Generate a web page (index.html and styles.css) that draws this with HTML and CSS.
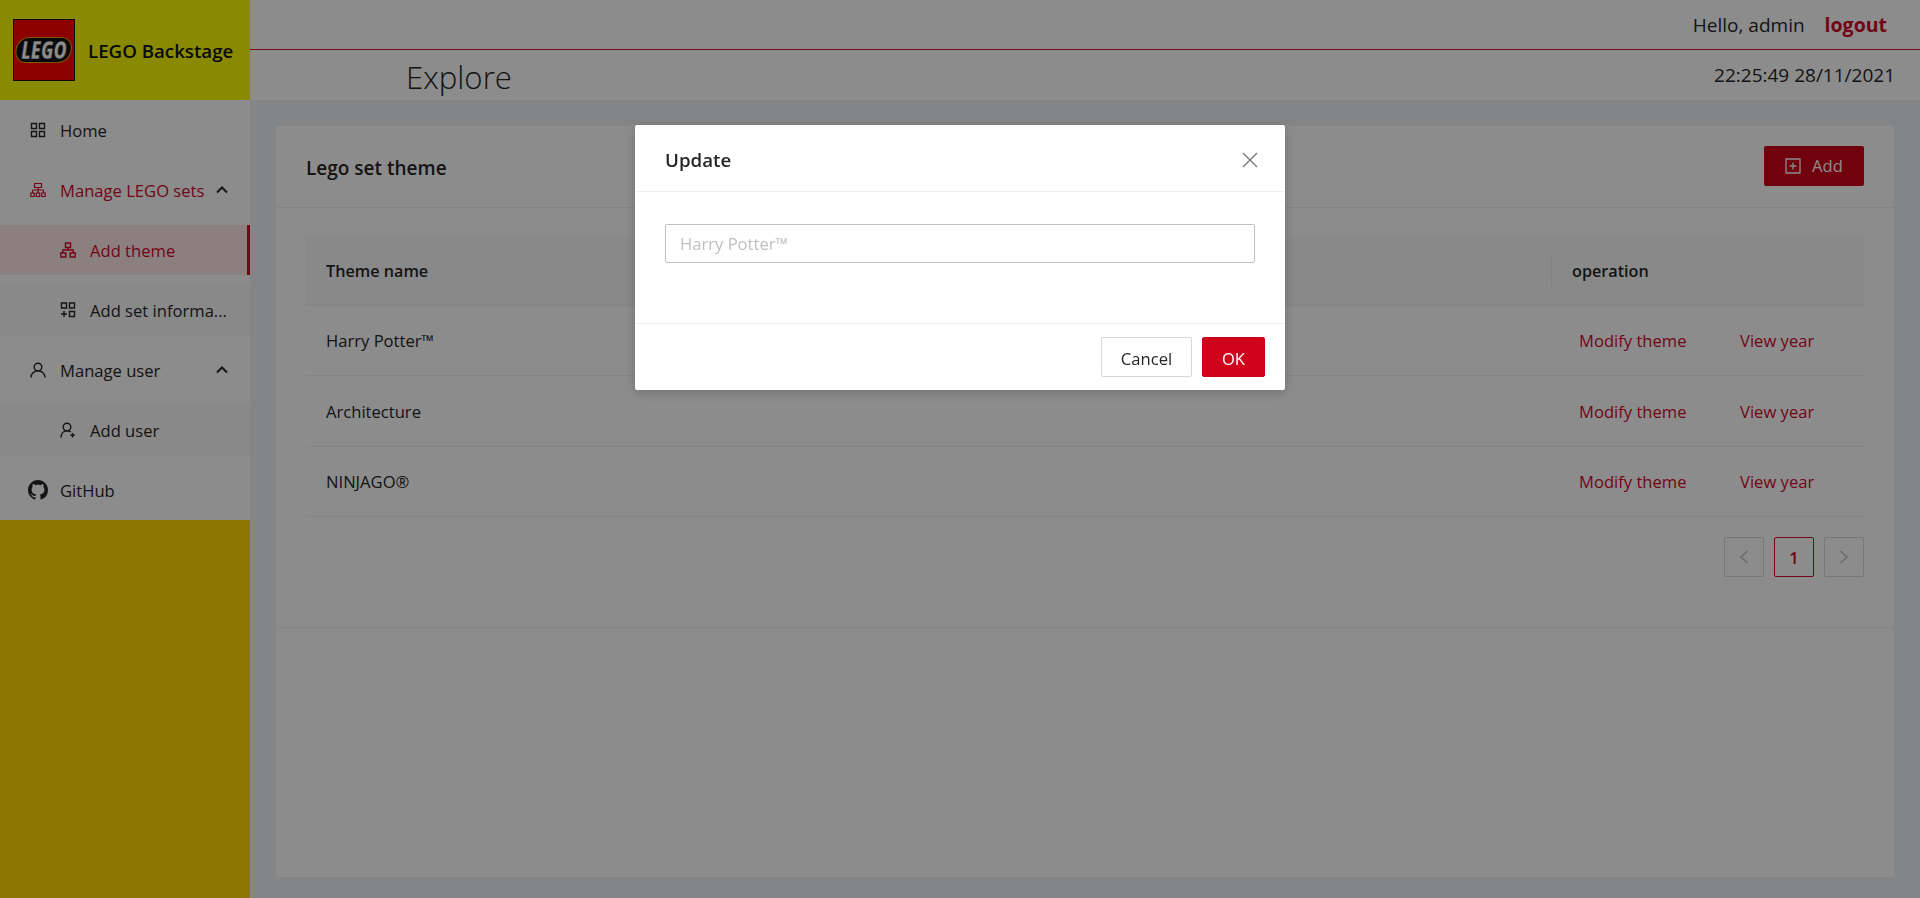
FILE: index.html
```html
<!DOCTYPE html>
<html lang="en">
<head>
    <meta charset="UTF-8">
    <title>LEGO Backstage</title>
    <link rel="stylesheet" href="styles.css">
</head>
<body>
    <aside class="sider">
        <div class="brand">
            <svg class="logo" viewBox="0 0 62 62">
                <rect x="0.5" y="0.5" width="61" height="61" fill="#ff0000" stroke="#1a1a1a"/>
                <rect x="1" y="18" width="56" height="26" rx="12" fill="#e3a000" transform="skewX(-8) translate(6 0)"/>
                <rect x="2" y="19" width="54" height="24" rx="11" fill="#111" transform="skewX(-8) translate(6 0)"/>
                <text class="logo-text" text-anchor="middle" transform="translate(31 39.500) scale(1 1.350)">LEGO</text>
            </svg>
            <span class="brand-name">LEGO Backstage</span>
        </div>
        <nav class="menu">
            <a class="item">
                <svg class="icon" viewBox="0 0 16 16"><path d="M1.500 1.500h5v5h-5zM9.500 1.500h5v5h-5zM1.500 9.500h5v5h-5zM9.500 9.500h5v5h-5z"/></svg>
                <span>Home</span>
            </a>
            <a class="item active">
                <svg class="icon icon-thin" viewBox="0 0 16 16"><path d="M4.500 1.500h7v4h-7zM2.500 8h11M8 5.500V11M2.500 8v3M13.500 8v3M.8 11h3.400v3.500H.8zM6.300 11h3.400v3.500H6.300zM11.800 11h3.400v3.500h-3.400z"/></svg>
                <span>Manage LEGO sets</span>
                <svg class="arrow" viewBox="0 0 12 8"><path d="M1 6.500l5-5 5 5"/></svg>
            </a>
            <div class="submenu">
                <a class="item sub selected">
                    <svg class="icon" viewBox="0 0 16 16"><path d="M5.500 1h5v4.500h-5zM8 5.500V8M2.800 11V8h10.400v3M.8 11h5v4h-5zM10.200 11h5v4h-5z"/></svg>
                    <span>Add theme</span>
                </a>
                <a class="item sub">
                    <svg class="icon" viewBox="0 0 16 16"><path d="M1.500 1h5v5h-5zM9.500 1h5v5h-5zM9.500 9.500h5v5h-5zM4 9v6M1 12h6"/></svg>
                    <span>Add set informa...</span>
                </a>
            </div>
            <a class="item">
                <svg class="icon" viewBox="0 0 16 16"><circle cx="8" cy="5" r="3.800"/><path d="M1 15.500c0-4 3-6.700 7-6.700s7 2.700 7 6.700"/></svg>
                <span>Manage user</span>
                <svg class="arrow" viewBox="0 0 12 8"><path d="M1 6.500l5-5 5 5"/></svg>
            </a>
            <div class="submenu">
                <a class="item sub">
                    <svg class="icon" viewBox="0 0 16 16"><circle cx="7" cy="5" r="3.800"/><path d="M1 15.500c0-4 2.500-6.700 6-6.700 1.500 0 2.800.4 3.800 1.200M12.500 11v4.500M10.300 13.200h4.500"/></svg>
                    <span>Add user</span>
                </a>
            </div>
            <a class="item">
                <svg class="icon github" viewBox="0 0 16 16"><path d="M8 0C3.580 0 0 3.580 0 8c0 3.540 2.290 6.530 5.470 7.590.4.070.55-.17.55-.38 0-.19-.01-.82-.01-1.490-2.010.37-2.530-.49-2.690-.94-.09-.23-.48-.94-.82-1.130-.28-.15-.68-.52-.01-.53.63-.01 1.080.58 1.230.82.720 1.210 1.870.87 2.330.66.070-.52.280-.87.510-1.070-1.780-.2-3.640-.89-3.640-3.950 0-.87.310-1.590.820-2.150-.08-.2-.36-1.020.08-2.120 0 0 .67-.21 2.200.82.640-.18 1.320-.27 2-.27s1.360.09 2 .27c1.530-1.040 2.200-.82 2.200-.82.440 1.100.16 1.920.08 2.120.51.560.82 1.270.82 2.150 0 3.070-1.870 3.750-3.650 3.950.29.250.54.730.54 1.480 0 1.070-.01 1.930-.01 2.200 0 .21.150.46.550.38A8.010 8.010 0 0 0 16 8c0-4.420-3.580-8-8-8z"/></svg>
                <span>GitHub</span>
            </a>
        </nav>
        <div class="sider-rest"></div>
    </aside>

    <div class="main">
        <header class="header">
            <div class="topbar">
                <span>Hello, admin</span>
                <a class="logout">logout</a>
            </div>
            <div class="subbar">
                <h1 class="page-title">Explore</h1>
                <span class="clock">22:25:49 28/11/2021</span>
            </div>
        </header>
        <main class="content">
            <section class="card">
                <div class="card-head">
                    <h2 class="card-title">Lego set theme</h2>
                    <button class="btn-add">
                        <svg class="icon-add" viewBox="0 0 16 16"><path d="M1 1h14v14H1zM8 4.500v7M4.500 8h7"/></svg>
                        Add
                    </button>
                </div>
                <div class="card-body">
                    <table class="table">
                        <thead>
                            <tr>
                                <th>Theme name</th>
                                <th class="col-op">operation</th>
                            </tr>
                        </thead>
                        <tbody>
                            <tr>
                                <td>Harry Potter™</td>
                                <td class="ops"><a>Modify theme</a><a>View year</a></td>
                            </tr>
                            <tr>
                                <td>Architecture</td>
                                <td class="ops"><a>Modify theme</a><a>View year</a></td>
                            </tr>
                            <tr>
                                <td>NINJAGO®</td>
                                <td class="ops"><a>Modify theme</a><a>View year</a></td>
                            </tr>
                        </tbody>
                    </table>
                    <div class="pagination">
                        <span class="page disabled"><svg viewBox="0 0 10 14"><path d="M8.500 1L2 7l6.500 6"/></svg></span>
                        <span class="page current">1</span>
                        <span class="page disabled"><svg viewBox="0 0 10 14"><path d="M1.500 1L8 7l-6.500 6"/></svg></span>
                    </div>
                </div>
            </section>
        </main>
    </div>

    <div class="mask"></div>
    <div class="modal">
        <div class="modal-head">
            <span class="modal-title">Update</span>
            <svg class="modal-close" viewBox="0 0 16 16"><path d="M1 1l14 14M15 1L1 15"/></svg>
        </div>
        <div class="modal-body">
            <input class="modal-input" type="text" placeholder="Harry Potter™">
        </div>
        <div class="modal-foot">
            <button class="btn btn-cancel">Cancel</button>
            <button class="btn btn-primary">OK</button>
        </div>
    </div>
</body>
</html>
```

FILE: styles.css
```css
* {
    box-sizing: border-box;
}
html, body {
    height: 100%;
}
body {
    margin: 0;
    display: flex;
    overflow: hidden;
    background-color: #f0f2f5;
    color: #262626;
    font-family: "Open Sans", "Noto Sans", sans-serif;
    font-size: 16.6px;
}
h1, h2 {
    margin: 0;
    font-weight: 400;
}

/* sidebar */
.sider {
    width: 250px;
    flex: none;
    display: flex;
    flex-direction: column;
}
.brand {
    height: 100px;
    display: flex;
    align-items: center;
    gap: 13px;
    padding: 0 0 0 13px;
    background-color: #fafa05;
}
.logo {
    width: 62px;
    height: 62px;
    flex: none;
}
.logo-text {
    font-family: "Open Sans", sans-serif;
    font-size: 18px;
    font-weight: 800;
    font-style: italic;
    fill: #fff;
    stroke: #111;
    stroke-width: 0.4px;
}
.brand-name {
    font-size: 18.7px;
    font-weight: 600;
    color: #111;
    white-space: nowrap;
}
.menu {
    display: flex;
    flex-direction: column;
    gap: 10px;
    padding: 5px 0;
    background-color: #fff;
}
.submenu {
    display: flex;
    flex-direction: column;
    gap: 10px;
}
.item {
    height: 50px;
    display: flex;
    align-items: center;
    padding-left: 30px;
    padding-right: 22px;
    white-space: nowrap;
}
.item.sub {
    padding-left: 60px;
    background-color: #fafafa;
}
.item.active {
    color: #cf0a2c;
}
.item.selected {
    color: #cf0a2c;
    background-color: #ffe8e8;
    border-right: 3px solid #cf0a2c;
}
.icon {
    width: 16px;
    height: 16px;
    flex: none;
    margin-right: 14px;
    fill: none;
    stroke: currentColor;
    stroke-width: 1.400;
}
.icon-thin {
    stroke-width: 1.200;
}
.icon.github {
    width: 20px;
    height: 20px;
    margin-left: -2px;
    margin-right: 12px;
    fill: currentColor;
    stroke: none;
}
.arrow {
    width: 12px;
    height: 8px;
    margin-left: auto;
    flex: none;
    fill: none;
    stroke: #262626;
    stroke-width: 2;
}
.sider-rest {
    flex: 1;
    background-color: #ffd500;
}

/* header */
.main {
    flex: 1;
    min-width: 0;
    display: flex;
    flex-direction: column;
}
.header {
    height: 100px;
    flex: none;
    background-color: #fff;
}
.topbar {
    height: 50px;
    display: flex;
    justify-content: flex-end;
    align-items: center;
    gap: 20px;
    padding-right: 33px;
    border-bottom: 1px solid #cf0a2c;
    font-size: 19px;
}
.logout {
    font-weight: 700;
    font-size: 19.5px;
    color: #cf0a2c;
}
.subbar {
    height: 50px;
    display: flex;
    justify-content: space-between;
    padding: 0 25px 0 156px;
}
.page-title {
    font-size: 31.2px;
    font-weight: 300;
    line-height: 54px;
}
.clock {
    font-size: 19px;
    line-height: 50px;
}

/* content */
.content {
    flex: 1;
    padding: 26px 26px 21px;
    display: flex;
    flex-direction: column;
}
.card {
    flex: 1;
    background-color: #fff;
}
.card-head {
    height: 82px;
    display: flex;
    justify-content: space-between;
    align-items: center;
    padding: 0 30px 2px;
    border-bottom: 1px solid #f0f0f0;
}
.card-title {
    font-size: 19px;
    font-weight: 600;
    padding-top: 5px;
}
.btn-add {
    width: 100px;
    height: 40px;
    display: flex;
    justify-content: center;
    align-items: center;
    gap: 11px;
    border: none;
    border-radius: 2px;
    background-color: #d0021b;
    color: #fff;
    font: inherit;
}
.icon-add {
    width: 16px;
    height: 16px;
    fill: none;
    stroke: currentColor;
    stroke-width: 1.300;
}
.card-body {
    height: 420px;
    padding: 29px 30px 0;
    border-bottom: 1px solid #f0f0f0;
}
.table {
    width: 100%;
    border-collapse: collapse;
}
.table th {
    height: 68px;
    padding: 0 21px 0 20px;
    text-align: left;
    font-weight: 600;
    font-size: 16.2px;
    background-color: #fafafa;
    border-bottom: 1px solid #f0f0f0;
}
.table td {
    height: 70.500px;
    padding: 1px 21px 0 20px;
    border-bottom: 1px solid #f0f0f0;
}
.col-op {
    width: 313px;
    position: relative;
}
.col-op::before {
    content: "";
    position: absolute;
    left: 0;
    top: 19px;
    bottom: 19px;
    width: 1px;
    background-color: #ededed;
}
.table th.col-op {
    padding-left: 21px;
}
.ops a {
    display: inline-block;
    color: #cf0a2c;
}
.ops a:first-child {
    width: 161px;
    margin-left: 8px;
}
.pagination {
    display: flex;
    justify-content: flex-end;
    gap: 10px;
    margin-top: 20px;
}
.page {
    width: 40px;
    height: 40px;
    display: flex;
    justify-content: center;
    align-items: center;
    border: 1px solid #d9d9d9;
    border-radius: 2px;
    font-weight: 600;
}
.page svg {
    width: 10px;
    height: 14px;
    fill: none;
    stroke: #bfbfbf;
    stroke-width: 1.400;
}
.page.current {
    border-color: #cf0a2c;
    color: #cf0a2c;
}

/* modal */
.mask {
    position: fixed;
    inset: 0;
    background-color: rgba(0, 0, 0, 0.45);
}
.modal {
    position: fixed;
    left: 635px;
    top: 125px;
    width: 650px;
    height: 265px;
    display: flex;
    flex-direction: column;
    background-color: #fff;
    border-radius: 2px;
    box-shadow: 0 3px 12px rgba(0, 0, 0, 0.2);
}
.modal-head {
    height: 67px;
    flex: none;
    display: flex;
    justify-content: space-between;
    align-items: center;
    padding: 3px 27px 0 30px;
    border-bottom: 1px solid #f0f0f0;
}
.modal-title {
    font-size: 18.7px;
    font-weight: 600;
}
.modal-close {
    width: 16px;
    height: 16px;
    fill: none;
    stroke: #777;
    stroke-width: 1.400;
}
.modal-body {
    flex: 1;
    padding: 32px 30px 0;
}
.modal-input {
    width: 100%;
    height: 39px;
    padding: 0 14px;
    border: 1px solid #c4c0c0;
    border-radius: 2px;
    font: inherit;
    outline: none;
}
.modal-input::placeholder {
    color: #bfbfbf;
}
.modal-foot {
    height: 67px;
    flex: none;
    display: flex;
    justify-content: flex-end;
    align-items: flex-start;
    gap: 10px;
    padding: 13px 20px 0;
    border-top: 1px solid #f0f0f0;
}
.btn {
    height: 40px;
    padding: 2px 0 0;
    border: 1px solid #d9d9d9;
    border-radius: 2px;
    background-color: #fff;
    color: #262626;
    font: inherit;
}
.btn-cancel {
    width: 91px;
}
.btn-primary {
    width: 63px;
    border-color: #d0021b;
    background-color: #d0021b;
    color: #fff;
}
```
